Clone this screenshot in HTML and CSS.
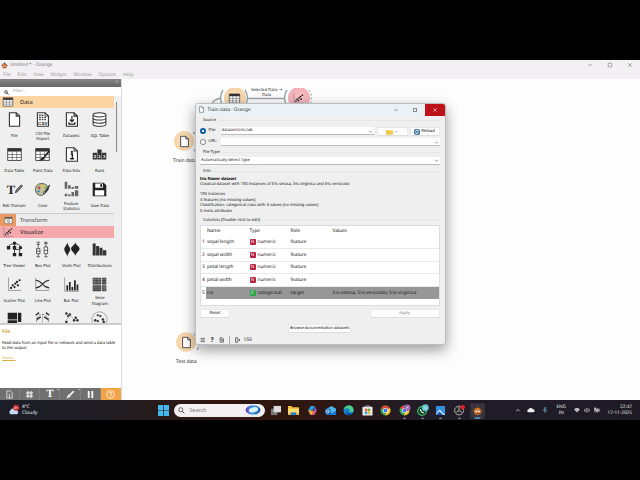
FILE: index.html
```html
<!DOCTYPE html>
<html lang="en">
<head>
    <meta charset="UTF-8">
    <title>Untitled * - Orange</title>
    <link rel="stylesheet" href="styles.css">
</head>
<body>
    <!-- shared shapes -->
    <svg width="0" height="0" class="defs">
        <symbol id="doc" viewBox="0 0 20 20"><path d="M4 2h8l4 4v12H4z" fill="#fff" stroke="#333" stroke-width="1.3"/><path d="M12 2v4h4" fill="none" stroke="#333" stroke-width="1.3"/></symbol>
        <symbol id="table" viewBox="0 0 20 20"><path d="M2 3h16v14H2z" fill="#fff" stroke="#333"/><path d="M2 3h16v3.500H2z" fill="#333"/><path d="M7.300 6v11M12.600 6v11M2 10h16M2 13.500h16" stroke="#555" stroke-width=".8"/></symbol>
        <symbol id="scatter" viewBox="0 0 20 20"><path d="M3 2v15h15" fill="none" stroke="#777" stroke-width=".8"/><g fill="#222"><circle cx="6" cy="14" r="1.300"/><circle cx="8" cy="11" r="1.300"/><circle cx="10" cy="13" r="1.300"/><circle cx="11" cy="9" r="1.300"/><circle cx="13" cy="7" r="1.300"/><circle cx="14" cy="11" r="1.300"/><circle cx="16" cy="5" r="1.300"/></g></symbol>
        <symbol id="orange" viewBox="0 0 20 20"><path d="M4 6l3-1 3-4 3 4 3 1-1 4H5z" fill="#6b4424"/><circle cx="10" cy="12" r="6.500" fill="#d97b35"/><path d="M1 10h5M14 10h5M5 16h10" stroke="#9a552a" stroke-width="2.500"/><circle cx="7.500" cy="11.500" r="1.600" fill="#fff"/><circle cx="12.500" cy="11.500" r="1.600" fill="#fff"/></symbol>
        <symbol id="chrome" viewBox="0 0 20 20"><circle cx="10" cy="10" r="9" fill="#38a655"/><path d="M10 10L2.200 5.500A9 9 0 0 1 17.800 5.500z" fill="#e44236"/><path d="M10 10l7.800-4.500A9 9 0 0 1 10 19z" fill="#fbc623"/><circle cx="10" cy="10" r="4.600" fill="#fff"/><circle cx="10" cy="10" r="3.500" fill="#397be8"/></symbol>
        <symbol id="chev" viewBox="0 0 10 10"><path d="M2 3.500l3 3 3-3" fill="none" stroke="#555" stroke-width="1.200"/></symbol>
    </svg>

    <div class="app">
        <div class="titlebar">
            <svg class="logo"><use href="#orange"/></svg>
            <span>Untitled * - Orange</span>
            <div class="win-buttons">
                <svg viewBox="0 0 10 10"><path d="M2 5h6" stroke="#777"/></svg>
                <svg viewBox="0 0 10 10"><path d="M2 2h6v6H2z" fill="none" stroke="#777"/></svg>
                <svg viewBox="0 0 10 10"><path d="M2 2l6 6M8 2l-6 6" stroke="#777"/></svg>
            </div>
        </div>
        <div class="menubar"><span>File</span><span>Edit</span><span>View</span><span>Widget</span><span>Window</span><span>Options</span><span>Help</span></div>
        <div class="workspace">
            <div class="sidebar">
                <div class="dock-title">«</div>
                <div class="filter"><svg viewBox="0 0 10 10"><circle cx="4" cy="4" r="2.700" fill="none" stroke="#222" stroke-width="1.400"/><path d="M6 6l3.200 3.200" stroke="#222" stroke-width="1.700"/></svg><span>Filter...</span></div>
                <div class="toolbox">
                    <div class="category data"><i><svg><use href="#table"/></svg></i><span>Data</span></div>
                    <div class="widgets">
                        <div class="widget"><svg><use href="#doc"/></svg><span>File</span></div>
                        <div class="widget"><svg viewBox="0 0 20 20"><path d="M4 2h9l4 4v12H4z" fill="#fff" stroke="#333" stroke-width="1.300"/><path d="M13 2v4h4" fill="none" stroke="#333"/><path d="M6 5h5M6 7.500h9M6 10h9" stroke="#444" stroke-dasharray="2 1" stroke-width="1.600"/><text x="4.800" y="17" class="glyph-csv">CSV</text></svg><span>CSV File<br>Import</span></div>
                        <div class="widget"><svg viewBox="0 0 20 20"><path d="M4 2h9l4 4v12H4z" fill="#fff" stroke="#333" stroke-width="1.300"/><path d="M13 2v4h4M10.500 6v6M8 10l2.500 2.500L13 10M7 13v2.500h7V13" fill="none" stroke="#222" stroke-width="1.300"/></svg><span>Datasets</span></div>
                        <div class="widget"><svg viewBox="0 0 20 20"><path d="M2.500 4.500v11c0 3.300 15 3.300 15 0v-11" fill="#fff" stroke="#333" stroke-width="1.200"/><ellipse cx="10" cy="4.500" rx="7.500" ry="2.500" fill="#fff" stroke="#333" stroke-width="1.200"/><path d="M2.500 8.200c0 3.300 15 3.300 15 0M2.500 11.900c0 3.300 15 3.300 15 0" fill="none" stroke="#333" stroke-width="1.200"/></svg><span>SQL Table</span></div>
                        <div class="widget"><svg><use href="#table"/></svg><span>Data Table</span></div>
                        <div class="widget"><svg viewBox="0 0 20 20"><use href="#table" width="20" height="20"/><path d="M18 6l-6 7" stroke="#222" stroke-width="2"/><path d="M5 17c4 0 3-5 7-4 1 3-2 5-7 4z" fill="#222"/></svg><span>Paint Data</span></div>
                        <div class="widget"><svg viewBox="0 0 20 20"><path d="M4 2h9l4 4v12H4z" fill="#fff" stroke="#333" stroke-width="1.300"/><path d="M13 2v4h4" fill="none" stroke="#333" stroke-width="1.200"/><circle cx="10.500" cy="7" r="1.300" fill="#222"/><path d="M9 9.500h2V15M8.500 15h4.500" fill="none" stroke="#222" stroke-width="1.700"/></svg><span>Data Info</span></div>
                        <div class="widget"><svg viewBox="0 0 20 20"><path d="M2 8h5v8H2zM7.500 4h5v12h-5zM13 8h5v8h-5z" fill="#333"/><text x="3.200" y="14.500" class="glyph-rank">2</text><text x="8.600" y="14.500" class="glyph-rank">1</text><text x="14.200" y="14.500" class="glyph-rank">3</text></svg><span>Rank</span></div>
                        <div class="widget"><svg viewBox="0 0 20 20"><text x="1" y="15" class="glyph-t">T</text><path d="M11 14l1-3.500 6-6 1.500 1.500-6 6.500z" fill="#777" stroke="#333" stroke-width=".8"/></svg><span>Edit Domain</span></div>
                        <div class="widget"><svg viewBox="0 0 20 20"><path d="M9 3C3 3 1 8 2 12c1 5 7 6 9 4 1-1-1-3 1-4s5 0 5-3-3-6-8-6z" fill="#c2c293" stroke="#444"/><circle cx="6" cy="8" r="1.600" fill="#b9475c"/><circle cx="10" cy="6" r="1.500" fill="#e3c43b"/><circle cx="5.500" cy="12" r="1.500" fill="#4a8bc2"/><circle cx="14" cy="8" r="1.300" fill="#59a062"/><path d="M18 4l-5 8-2 5 4-4 4-8z" fill="#333"/></svg><span>Color</span></div>
                        <div class="widget"><svg viewBox="0 0 20 20"><path d="M2 1h3v8H2zM6 5h3v4H6zM10 7h3v2h-3zM14 6h4v3h-4zM2 15h3v3H2zM6 16h3v2H6zM10 13h3v5h-3zM14 11h4v7h-4z" fill="#666"/></svg><span>Feature<br>Statistics</span></div>
                        <div class="widget"><svg viewBox="0 0 20 20"><path d="M2 2h13l3 3v13H2z" fill="#222"/><path d="M5 3h9v5H5zM4.500 11h11v6h-11z" fill="#fff"/><path d="M11 3.500h2v3.500h-2z" fill="#222"/></svg><span>Save Data</span></div>
                    </div>
                    <div class="category transform"><i><svg viewBox="0 0 20 20"><path d="M2 3h16v14H2z" fill="#fff" stroke="#444"/><path d="M2 3h16v3H2z" fill="#444"/><path d="M6 11a4 3 0 0 1 7-1M14 12a4 3 0 0 1-7 1" fill="none" stroke="#333" stroke-width="1.500"/></svg></i><span>Transform</span></div>
                    <div class="category visualize"><i><svg><use href="#scatter"/></svg></i><span>Visualize</span></div>
                    <div class="widgets visual">
                        <div class="widget"><svg viewBox="0 0 20 20"><path d="M10 3v5M3 7c0-5 14-5 14 0M10 8v8M10 10h6v5" fill="none" stroke="#333"/><path d="M1 6h4v4H1zM8 6h4v4H8zM8 14h4v4H8zM15 14h4v4h-4z" fill="#222"/><circle cx="10" cy="2.500" r="2" fill="#222"/><circle cx="17" cy="8" r="2" fill="#222"/></svg><span>Tree Viewer</span></div>
                        <div class="widget"><svg viewBox="0 0 20 20"><path d="M5 1v18M14 1v18M3 1.500h4M12 1.500h4M3 18.500h4M12 18.500h4M3 4h4M12 3h4" stroke="#555" stroke-width="1"/><path d="M3 9h4v6H3zM12 7h4v8h-4z" fill="#fff" stroke="#444"/><path d="M3 12h4M12 11h4" stroke="#444"/></svg><span>Box Plot</span></div>
                        <div class="widget"><svg viewBox="0 0 20 20"><path d="M5 1C5 5 1.500 7 1.500 10S5 15 5 19c0-4 3.500-6 3.500-9S5 5 5 1zM14.500 1c0 4-5 5-5 8s5 5 5 9c0-4 5-6 5-9s-5-4-5-8z" fill="#222"/></svg><span>Violin Plot</span></div>
                        <div class="widget"><svg viewBox="0 0 20 20"><path d="M2 3h3.500v14H2zM6 6h3.500v11H6zM10 8h3.500v9H10zM14 11h4v6h-4z" fill="#333"/></svg><span>Distributions</span></div>
                        <div class="widget"><svg><use href="#scatter"/></svg><span>Scatter Plot</span></div>
                        <div class="widget"><svg viewBox="0 0 20 20"><path d="M2 2v15h16" fill="none" stroke="#777" stroke-width=".8"/><path d="M2 5c8 0 8 9 16 9M2 14c8 0 8-9 16-9" fill="none" stroke="#333" stroke-width="1.300"/></svg><span>Line Plot</span></div>
                        <div class="widget"><svg viewBox="0 0 20 20"><path d="M2 2v16h17" fill="none" stroke="#777" stroke-width=".8"/><path d="M4 11h2v6H4zM7 7h2v10H7zM10 13h2v4h-2zM13 5h2v12h-2zM16 10h2v7h-2z" fill="#222"/></svg><span>Bar Plot</span></div>
                        <div class="widget"><svg viewBox="0 0 20 20"><path d="M2 2h10v8H2zM13 2h5v8h-5zM2 11h10v7H2zM13 11h5v7h-5z" fill="#444"/><path d="M2 4h16M2 7h16M2 13h16M2 15.500h16M4.500 2v8M9 2v8M15.500 11v7" stroke="#bbb" stroke-width=".5"/></svg><span>Sieve<br>Diagram</span></div>
                        <div class="widget"><svg viewBox="0 0 20 20"><path d="M2 2h11v8H2zM14 2h4v11h-4zM2 11h11v7H2z" fill="#222"/></svg></div>
                        <div class="widget"><svg viewBox="0 0 20 20"><path d="M2 5l4-3M14 2l4 3M3 10l5-3M12 7l5 3" stroke="#333" stroke-width="1.800"/><circle cx="10" cy="11" r="7" fill="none" stroke="#555" stroke-dasharray="2 2"/><path d="M10 3v12" stroke="#888" stroke-width=".6"/></svg></div>
                        <div class="widget"><svg viewBox="0 0 20 20"><path d="M3 12l5-7 6 6" fill="none" stroke="#999" stroke-width=".8"/><g fill="#333"><circle cx="4" cy="3" r="1.500"/><circle cx="8" cy="4" r="1.500"/><circle cx="6" cy="6" r="1.300"/><circle cx="15" cy="8" r="1.500"/><circle cx="17" cy="11" r="1.500"/><circle cx="13" cy="11" r="1.500"/><circle cx="4" cy="13" r="1.500"/></g></svg></div>
                        <div class="widget"><svg viewBox="0 0 20 20"><circle cx="10" cy="10" r="9" fill="none" stroke="#888" stroke-width=".8"/><g fill="#333"><circle cx="8" cy="5" r="1.300"/><circle cx="11" cy="6" r="1.300"/><circle cx="5" cy="11" r="1.500"/><circle cx="14" cy="10" r="1.500"/><circle cx="8" cy="12" r="1.300"/><circle cx="15" cy="13" r="1.500"/></g></svg></div>
                    </div>
                    <div class="scrollbar"></div>
                </div>
                <div class="help">
                    <b>File</b>
                    <p>Read data from an input file or network and send a data table<br>to the output.</p>
                    <a>more...</a>
                </div>
                <div class="tools">
                    <span><svg viewBox="0 0 10 10"><path d="M2 1h4l2 2v6H2zM5 4v4M4 8h2" fill="none" stroke="#ddd"/></svg></span>
                    <span><svg viewBox="0 0 10 10"><path d="M3.300 1v8M6.700 1v8M1 3.300h8M1 6.700h8" stroke="#fff" stroke-width="1.100"/></svg></span>
                    <span class="tool-text">T<em></em></span>
                    <span><svg viewBox="0 0 10 10"><path d="M1 9l2-4 2 2zM4 5l4-4 1 1-4 4z" fill="#fff" stroke="#fff" stroke-width=".6"/></svg><em></em></span>
                    <span><svg viewBox="0 0 10 10"><path d="M2 1h2v8H2zM6 1h2v8H6z" fill="#fff"/></svg></span>
                    <span class="active"><svg viewBox="0 0 10 10"><circle cx="5" cy="5" r="4.300" fill="none" stroke="#fff" stroke-width=".8"/><path d="M3.500 4a1.500 1.500 0 1 1 1.500 1.500v1M5 7.200v1" fill="none" stroke="#fff" stroke-width=".9"/></svg></span>
                </div>
            </div>

            <div class="canvas">
                <svg class="links" viewBox="122 88 518 312">
                    <path d="M212 104c1-3 4-5 9-6M247 98.500h38" fill="none" stroke="#9da5a8" stroke-width="1.300"/>
                    <path d="M223 90a14 14 0 0 0 0 16M245 90a14 14 0 0 1 0 16M287 90a14 14 0 0 0 0 16" fill="none" stroke="#93a3a9" stroke-width="1.400"/>
                    <path d="M309 90a14 14 0 0 1 0 16" fill="none" stroke="#a7b3b6" stroke-width="1.300" stroke-dasharray="2 2"/>
                    <path d="M193 132q4 3 5 9t-4 10M194 334q4 3 5 8t-3 9" fill="none" stroke="#8ba4ae" stroke-width="1.200" stroke-dasharray="3 2"/>
                </svg>
                <div class="node table-node"><svg><use href="#table"/></svg></div>
                <div class="node scatter-node"><svg><use href="#scatter"/></svg></div>
                <div class="node train-node"><svg><use href="#doc"/></svg></div>
                <div class="node test-node"><svg><use href="#doc"/></svg></div>
                <span class="link-label">Selected Data <em>→</em><br>Data</span>
                <span class="node-label train-label">Train data</span>
                <span class="node-label test-label">Test data</span>
            </div>
        </div>
    </div>

    <div class="dialog">
        <div class="dialog-title">
            <svg><use href="#doc"/></svg><span>Train data - Orange</span>
            <div class="dialog-buttons">
                <i><svg viewBox="0 0 10 10"><path d="M1 5h8" stroke="#555" stroke-width="1.500"/></svg></i>
                <i><svg viewBox="0 0 10 10"><path d="M1 1h8v8H1z" fill="none" stroke="#333" stroke-width="1.500"/></svg></i>
                <i class="close"><svg viewBox="0 0 10 10"><path d="M1 1l8 8M9 1l-8 8" stroke="#fff" stroke-width="1.400"/></svg></i>
            </div>
        </div>
        <div class="dialog-body">
            <div class="legend source-legend">Source</div>
            <div class="source-row">
                <i class="radio checked"></i><label>File:</label>
                <div class="combo"><span>datasets\iris.tab</span><svg><use href="#chev"/></svg></div>
                <button class="browse"><svg viewBox="0 0 10 8"><path d="M0 1h4l1 1h5v6H0z" fill="#efca4e"/></svg>...</button>
                <button class="reload"><svg viewBox="0 0 10 10"><rect width="10" height="10" rx="3" fill="#3b7299"/><path d="M2 5a3 3 0 0 1 5-2M8 5a3 3 0 0 1-5 2M7 1v2.500H5M3 9V6.500h2" fill="none" stroke="#fff" stroke-width="1.200"/></svg>Reload</button>
            </div>
            <div class="source-row url-row">
                <i class="radio"></i><label>URL:</label>
                <div class="combo"><svg><use href="#chev"/></svg></div>
            </div>
            <div class="legend type-legend">File Type</div>
            <div class="combo type-combo"><span>Automatically detect type</span><svg><use href="#chev"/></svg></div>
            <div class="legend info-legend">Info</div>
            <div class="info">
                <b>Iris flower dataset</b>
                <p>Classical dataset with 150 instances of Iris setosa, Iris virginica and Iris versicolor.</p>
                <p class="stats">150 instances<br>4 features (no missing values)<br>Classification; categorical class with 3 values (no missing values)<br>0 meta attributes</p>
            </div>
            <div class="legend columns-legend">Columns (Double click to edit)</div>
            <div class="columns">
                <div class="row head"><span></span><span>Name</span><span>Type</span><span>Role</span><span>Values</span></div>
                <div class="row"><span>1</span><span>sepal length</span><span><i class="badge">N</i>numeric</span><span>feature</span><span></span></div>
                <div class="row"><span>2</span><span>sepal width</span><span><i class="badge">N</i>numeric</span><span>feature</span><span></span></div>
                <div class="row"><span>3</span><span>petal length</span><span><i class="badge">N</i>numeric</span><span>feature</span><span></span></div>
                <div class="row"><span>4</span><span>petal width</span><span><i class="badge">N</i>numeric</span><span>feature</span><span></span></div>
                <div class="row selected"><span>5</span><span>iris</span><span><i class="badge cat">C</i>categorical</span><span>target</span><span>Iris-setosa, Iris-versicolor, Iris-virginica</span></div>
            </div>
            <div class="actions"><button>Reset</button><button class="apply">Apply</button></div>
            <button class="docs">Browse documentation datasets</button>
            <div class="status">
                <svg viewBox="0 0 10 10"><path d="M1 2h8M1 5h8M1 8h8" stroke="#444" stroke-width="1.300"/></svg>
                <b>?</b>
                <svg viewBox="0 0 10 10"><path d="M2 1h4l2 2v6H2zM4 4h3M4 6h3" fill="none" stroke="#333" stroke-width="1.200"/></svg>
                <i></i>
                <svg viewBox="0 0 10 10"><path d="M5 3V1H1v8h4V7M3 5h6M7 3l2 2-2 2" fill="none" stroke="#333" stroke-width="1.200"/></svg>
                <span>150</span>
            </div>
        </div>
    </div>

    <div class="taskbar">
        <div class="weather">
            <svg viewBox="0 0 14 12"><path d="M3 11a3 3 0 0 1 0-5 4 4 0 0 1 7 0 2.600 2.600 0 0 1 0 5z" fill="#c6d9f8"/><circle cx="9.500" cy="3.500" r="3.500" fill="#d92c36"/><text x="7.200" y="5" class="glyph-count">9+</text></svg>
            <div><span>4°C</span><span>Cloudy</span></div>
        </div>
        <div class="apps">
            <svg viewBox="0 0 10 10"><path d="M0 0h4.700v4.700H0zM5.300 0H10v4.700H5.300zM0 5.300h4.700V10H0zM5.300 5.300H10V10H5.300z" fill="#45b9ed"/></svg>
            <div class="search"><svg viewBox="0 0 10 10"><circle cx="4" cy="4" r="3" fill="none" stroke="#333"/><path d="M6 6l3 3" stroke="#333" stroke-width="1.300"/></svg><span>Search</span><svg class="bing" viewBox="0 0 16 10"><defs><linearGradient id="g"><stop offset="0" stop-color="#6a39b5"/><stop offset=".5" stop-color="#3a9fe8"/><stop offset="1" stop-color="#1b4ea4"/></linearGradient></defs><ellipse cx="8" cy="5" rx="7.500" ry="4.700" fill="url(#g)"/><ellipse cx="8.500" cy="5" rx="4.800" ry="2.400" fill="#d5f5f6" transform="rotate(-15 8 5)"/></svg></div>
            <svg viewBox="0 0 12 12"><path d="M1 4h7v7H1z" fill="#777"/><path d="M4 1h8v7H4z" fill="#ddd"/></svg>
            <svg viewBox="0 0 12 12"><path d="M0 1h4l1 1.500h7V11H0z" fill="#f2bd2f"/><path d="M0 4h12v5H0z" fill="#fbdc70"/><path d="M3 8h6v3H3z" fill="#277fd0"/></svg>
            <svg viewBox="0 0 12 12"><path d="M4 1h4L6 6H1z" fill="#299fe0"/><path d="M8 1l3 5H7z" fill="#7261dc"/><path d="M1 6h5l2 5H4z" fill="#e9b441"/><path d="M7 6h4l-3 5H5z" fill="#df5a7d"/></svg>
            <svg viewBox="0 0 12 12"><path d="M2 4l5-3 5 3v7H2z" fill="#49b5f0"/><path d="M3 6l5 3 4-3v5H3z" fill="#1679ca"/><rect y="4" width="6" height="6" rx="1" fill="#105fa8"/><circle cx="3" cy="7" r="1.600" fill="none" stroke="#fff"/></svg>
            <svg viewBox="0 0 12 12"><circle cx="6" cy="6" r="5.500" fill="#1584c9"/><path d="M1 4c2-5 11-5 10.500 2-.5 3-5 2-4 0C7 3 3 3 1 5z" fill="#4fd08d"/><path d="M4 6c0 4 4 4 7 3-3 4-8 3-7-3z" fill="#0a397e"/></svg>
            <svg viewBox="0 0 12 12"><path d="M4 3V1h4v2" fill="none" stroke="#aac"/><rect x=".5" y="2" width="11" height="9.500" rx="1" fill="#eee"/><path d="M3 4h2.800v2.800H3z" fill="#e46339"/><path d="M6.200 4H9v2.800H6.200z" fill="#6dab35"/><path d="M3 7.200h2.800V10H3z" fill="#349bdc"/><path d="M6.200 7.200H9V10H6.200z" fill="#e9b42f"/></svg>
            <svg><use href="#chrome"/></svg>
            <svg class="running" viewBox="0 0 12 12"><use href="#chrome" width="12" height="12"/><circle cx="9" cy="3" r="3.500" fill="#9b6ab9"/><path d="M8 4l2-2" stroke="#fff"/><path d="M4.500 14.500h3" stroke="#aaa"/></svg>
            <svg class="running" viewBox="0 0 12 12"><circle cx="5.500" cy="6.500" r="4.800" fill="#15391f" stroke="#39b568" stroke-width="1.400"/><path d="M3.500 4.500q1 4 4 4" fill="none" stroke="#fff" stroke-width="1.300"/><circle cx="9" cy="3" r="3.800" fill="#5fc3d0"/><text x="6.700" y="4.600" class="glyph-wa">22</text><path d="M4.500 14.500h3" stroke="#aaa"/></svg>
            <svg class="running" viewBox="0 0 12 12"><rect x="1" y="1" width="10" height="10" rx="1" fill="#3691dd"/><path d="M1 10l4-5 6 6H1z" fill="#d0eafb"/><path d="M1 11l4-4 4 4z" fill="#1a5ba9"/><path d="M4.500 14.500h3" stroke="#aaa"/></svg>
            <svg class="running" viewBox="0 0 12 12"><circle cx="5.500" cy="6" r="4.800" fill="#222" stroke="#bbb"/><path d="M5.500 6V2M5.500 6l3 2M5.500 6l-3 2" stroke="#bbb"/><circle cx="9.500" cy="2.500" r="2.500" fill="#e51b24"/><path d="M4.500 14.500h3" stroke="#aaa"/></svg>
            <svg class="current" viewBox="0 0 12 12"><rect x="-2" y="-2" width="16" height="17" rx="1" fill="#393440"/><use href="#orange" width="12" height="12"/><path d="M3 14.300h6" stroke="#55b3ec" stroke-width="1.400"/></svg>
        </div>
        <div class="tray">
            <svg class="up" viewBox="0 0 10 10"><path d="M2 7l3-3 3 3" fill="none" stroke="#ddd" stroke-width="1.300"/></svg>
            <svg class="cloud" viewBox="0 0 10 8"><path d="M2 7a2 2 0 0 1 0-4 3 3 0 0 1 5.500 0 2 2 0 0 1 .5 4z" fill="#eee"/></svg>
            <svg class="mic" viewBox="0 0 10 10"><path d="M4 1h2v5H4zM2 4.500c0 4 6 4 6 0M5 8v2" fill="none" stroke="#62abc0" stroke-width="1.200"/></svg>
            <div class="lang">ENG<br>IN</div>
            <svg class="wifi" viewBox="0 0 10 10"><path d="M0 4a7 7 0 0 1 10 0L5 9z" fill="#aaa"/><path d="M1 4a6 6 0 0 1 8 0M3 6a3 3 0 0 1 4 0" fill="none" stroke="#eee"/></svg>
            <svg class="sound" viewBox="0 0 10 10"><path d="M1 4h2l2-2v7L3 7H1zM6.500 4q1.500 1.500 0 3M8 2.500q3 3 0 6" fill="none" stroke="#ddd"/></svg>
            <svg class="battery" viewBox="0 0 10 10"><path d="M1 3h7v5H1zM9 4v3" fill="none" stroke="#ddd"/><path d="M3 4h4v3H3zM1 1h2v4H1z" fill="#ddd"/></svg>
            <div class="clock">22:47<br>17-11-2025</div>
        </div>
    </div>
</body>
</html>
```

FILE: styles.css
```css
* {
    box-sizing: border-box;
}

body {
    margin: 0;
    padding-top: 60px;
    width: 640px;
    height: 480px;
    background: #000;
    color: #1a1a1a;
    font-family: "Noto Sans", "Open Sans", sans-serif;
    font-size: 5px;
    line-height: 6px;
    text-rendering: geometricPrecision;
    overflow: hidden;
    position: relative;
}

svg {
    display: block;
    flex: none;
}

p {
    margin: 0;
}

i,
em {
    font-style: normal;
}

.defs {
    position: absolute;
}

button {
    display: flex;
    align-items: center;
    justify-content: center;
    padding: 1px 0 0;
    border: 1px solid #e9e9e9;
    border-bottom-color: #ddd;
    border-radius: 1px;
    background: #fdfdfd;
    color: #111;
    font: 4.2px/6px "Noto Sans", sans-serif;
    text-rendering: geometricPrecision;
}

.app {
    height: 340px;
    display: flex;
    flex-direction: column;
    background: #f2f0f3;
}

.titlebar {
    height: 10px;
    display: flex;
    align-items: center;
    padding-left: 1px;
    gap: 2px;
    color: #777;
    font-size: 4.75px;
}

.logo {
    width: 7px;
    height: 7px;
}

.win-buttons {
    display: flex;
    gap: 14px;
    margin-left: auto;
    padding-right: 7px;
}

.win-buttons svg {
    width: 6px;
    height: 6px;
}

.menubar {
    height: 9px;
    display: flex;
    align-items: center;
    gap: 7px;
    padding-left: 3px;
    color: #999;
    font-size: 4.75px;
}

.workspace {
    height: 321px;
    display: flex;
}

.sidebar {
    width: 122px;
    display: flex;
    flex-direction: column;
    background: #efeff0;
    border-right: 1px solid #ddd;
}

.dock-title {
    height: 8px;
    padding-right: 3px;
    background: linear-gradient(#858585, #666);
    color: #ccc;
    text-align: right;
}

.filter {
    height: 9px;
    display: flex;
    align-items: center;
    gap: 4px;
    padding: 1px 0 0 4px;
    background: #fff;
    color: #999;
    font-size: 4.2px;
}

.filter svg {
    width: 5px;
    height: 5px;
}

.toolbox {
    height: 227px;
    overflow: hidden;
    position: relative;
}

.category {
    width: 114px;
    height: 12px;
    display: flex;
    align-items: center;
    font-size: 5.7px;
}

.category i {
    width: 16px;
    height: 100%;
    display: grid;
    place-items: center;
    margin-right: 4px;
}

.category svg {
    width: 12px;
    height: 12px;
}

.data {
    background: #fbd5a1;
}

.transform {
    height: 13px;
    background: #ececec;
    border-top: 1px solid #ccc;
    color: #444;
}

.transform i {
    background: #e89a62;
}

.transform svg {
    width: 9px;
    height: 9px;
}

.visualize {
    background: #f5a9ad;
}

.widgets {
    width: 114px;
    display: grid;
    grid-template-columns: repeat(4, 28.5px);
    grid-auto-rows: 35px;
    height: 105px;
    padding-top: 3px;
}

.visual {
    padding-top: 2.5px;
}

.widget {
    display: flex;
    flex-direction: column;
    align-items: center;
}

.widget svg {
    width: 17px;
    height: 17px;
}

.widget span {
    height: 12px;
    margin-top: 3px;
    display: grid;
    place-items: center;
    font-size: 4.1px;
    line-height: 5.3px;
    letter-spacing: -0.06px;
    word-spacing: 0.2px;
    text-align: center;
    white-space: nowrap;
}

.scrollbar {
    position: absolute;
    right: 4px;
    top: 6px;
    width: 1.5px;
    height: 50px;
    background: #888;
}

.help {
    height: 65px;
    padding: 4.5px 2px;
    border-top: 2px solid #ccc;
    background: #fff;
    font-size: 4.15px;
    line-height: 5.5px;
    white-space: nowrap;
}

.help b {
    display: block;
    font-size: 4.8px;
    color: #d2b03a;
}

.help p {
    margin: 5.5px 0 4.5px;
    letter-spacing: -0.15px;
    word-spacing: 0.2px;
}

.help a {
    color: #d2b03a;
    font-size: 4.1px;
    text-decoration: underline;
}

.tools {
    height: 12px;
    display: grid;
    grid-template-columns: repeat(6, 1fr);
    background: #707070;
}

.tools span {
    display: grid;
    place-items: center;
    position: relative;
    border-right: 1px solid #808080;
}

.tools svg {
    width: 9px;
    height: 9px;
}

.tools .tool-text {
    color: #fff;
    font: bold 11px/11px "Liberation Serif", serif;
}

.tools em {
    position: absolute;
    right: 0;
    top: 1px;
    border: 1.5px solid transparent;
    border-top-color: #fff;
}

.tools .active {
    background: #f3a348;
    border: 0;
}

/* the scene is scrolled, its top edge cuts the upper nodes */
.canvas {
    flex: 1;
    position: relative;
    border-top: 9px solid #fdfdfd;
    background: #fdfdfd;
    overflow: hidden;
}

.links {
    width: 518px;
    height: 312px;
}

.node {
    position: absolute;
    width: 20px;
    height: 20px;
    border-radius: 50%;
    display: grid;
    place-items: center;
    background: radial-gradient(#fce2bf, #f2cd9d);
}

.node svg {
    width: 13px;
    height: 13px;
}

.table-node {
    left: 101.5px;
    top: -1px;
    width: 22px;
    height: 22px;
}

.scatter-node {
    left: 165.5px;
    top: -1px;
    width: 22px;
    height: 22px;
    background: radial-gradient(#f9c2c7, #efa4ae);
}

.train-node {
    left: 52px;
    top: 43px;
}

.test-node {
    left: 54px;
    top: 244px;
}

.link-label,
.node-label {
    position: absolute;
    white-space: nowrap;
    text-align: center;
}

.link-label {
    left: 129px;
    top: 0;
    font-size: 4.1px;
    line-height: 5.3px;
}

.link-label em {
    font-family: "DejaVu Sans", sans-serif;
    font-size: 4.6px;
    line-height: 5px;
}

.node-label {
    font-size: 4.9px;
}

.train-label {
    left: 51px;
    top: 69.5px;
}

.test-label {
    left: 54px;
    top: 270.5px;
}

.dialog {
    position: absolute;
    left: 195px;
    top: 102.5px;
    width: 250.5px;
    height: 242.5px;
    border: 1px solid #b9bdc0;
    border-radius: 3px;
    background: #efefef;
    box-shadow: 0 5px 14px rgba(0, 0, 0, .4);
    overflow: hidden;
}

.dialog-title {
    height: 12px;
    display: flex;
    align-items: center;
    gap: 2.5px;
    padding-left: 2px;
    background: #eaf2f5;
    font-size: 4.75px;
    color: #333;
}

.dialog-title > svg {
    width: 7px;
    height: 7px;
}

.dialog-buttons {
    height: 12px;
    display: flex;
    margin-left: auto;
}

.dialog-buttons i {
    width: 19.5px;
    display: grid;
    place-items: center;
}

.dialog-buttons svg {
    width: 4px;
    height: 4px;
}

.dialog-buttons .close {
    background: #bd1219;
}

.dialog-body {
    padding: 0 5px 0 4px;
    font-size: 4.1px;
}

.legend {
    height: 6px;
    padding-left: 3px;
    display: flex;
    align-items: center;
    gap: 2px;
    white-space: nowrap;
}

.legend::after {
    content: "";
    flex: 1;
    border-top: 1px solid #e6e6e6;
}

.source-legend {
    margin: 2px 0 3px;
}

.source-row {
    height: 9px;
    display: flex;
    align-items: center;
}

.source-row label {
    width: 12px;
    margin-left: 3px;
}

.radio {
    width: 5.5px;
    height: 5.5px;
    border: 1px solid #777;
    border-radius: 50%;
    background: #fff;
}

.checked {
    border: 2px solid #1261a5;
}

.combo {
    flex: 1;
    height: 8px;
    display: flex;
    align-items: center;
    padding: 1px 1px 0;
    border-bottom: 1px solid #bbb;
    background: #fff;
}

.combo svg {
    width: 5px;
    height: 5px;
    margin-left: auto;
}

.browse {
    width: 31px;
    height: 9px;
    margin: 0 2px 0 3px;
    gap: 1px;
}

.browse svg {
    width: 7px;
    height: 6px;
}

.reload {
    width: 30px;
    height: 9px;
    gap: 1px;
}

.reload svg {
    width: 6px;
    height: 6px;
}

.url-row {
    margin-top: 2px;
}

.type-legend {
    margin: 3px 0 1px;
}

.info-legend {
    margin-top: 4px;
}

.info {
    padding-top: 2px;
    height: 43px;
    line-height: 5.4px;
    font-size: 4.1px;
    letter-spacing: -0.1px;
    word-spacing: 0.3px;
    white-space: nowrap;
}

.info b {
    display: block;
    color: #000;
}

.stats {
    margin-top: 5px;
}

.columns {
    height: 81px;
    margin-top: 1px;
    background: #fff;
    border: 1px solid #ddd;
    font-size: 4.75px;
    letter-spacing: -0.03px;
}

.row {
    height: 12.5px;
    display: grid;
    grid-template-columns: 5px 42.5px 41px 42px 1fr;
    align-items: center;
    border-bottom: 1px solid #e9e9e9;
    white-space: nowrap;
}

.row span {
    display: flex;
    align-items: center;
    padding-left: 1px;
}

.head {
    height: 11px;
    border-color: #fff;
}

.badge {
    width: 6px;
    height: 6px;
    margin-right: 2px;
    border-radius: 1px;
    background: #b52242;
    color: #fff;
    font-size: 4.5px;
    text-align: center;
}

.cat {
    background: #27a849;
}

.selected {
    background: linear-gradient(90deg, #fff 5px, #979797 5px);
    border: 0;
}

.actions {
    display: flex;
    justify-content: space-between;
    margin-top: 3.5px;
}

.actions button {
    width: 30px;
    height: 9px;
}

.actions .apply {
    width: 70px;
    color: #888;
}

.docs {
    width: 63px;
    height: 9px;
    margin: 5.5px auto 0;
    font-size: 4px;
    letter-spacing: -0.04px;
    white-space: nowrap;
}

.status {
    height: 10px;
    display: flex;
    align-items: center;
    gap: 5px;
    margin-top: 2px;
    font-size: 4.8px;
}

.status svg {
    width: 5.5px;
    height: 6px;
}

.status b {
    font-size: 6.5px;
}

.status i {
    width: 1px;
    height: 8px;
    background: #aaa;
}

.status span {
    margin-left: -2px;
}

.taskbar {
    height: 20px;
    display: flex;
    align-items: center;
    background: linear-gradient(90deg, #1b1d27, #201c22 18%, #30170f 35%, #2e1712 50%, #211c28 66%, #1e1b26);
    color: #eee;
}

.weather {
    width: 158px;
    display: flex;
    gap: 2px;
    padding-left: 8px;
}

.weather svg {
    width: 12px;
    height: 12px;
}

.weather span {
    display: block;
    font-size: 4.8px;
    line-height: 6.5px;
}

.apps {
    display: flex;
    align-items: center;
    gap: 7.4px;
}

.apps > svg {
    width: 11px;
    height: 11px;
    overflow: visible;
}

.search {
    width: 91px;
    height: 13px;
    margin: 0 -3px 0 -2px;
    display: flex;
    align-items: center;
    gap: 4px;
    padding: 0 4px;
    border-radius: 7px;
    background: #f2f0f1;
    color: #777;
    font-size: 5.4px;
}

.search svg {
    width: 7px;
    height: 7px;
}

.search .bing {
    width: 16px;
    height: 10px;
    margin-left: auto;
}

.tray {
    margin-left: auto;
    display: flex;
    align-items: center;
    padding-right: 8px;
    font-size: 4.7px;
    line-height: 6.4px;
}

.tray svg {
    width: 6px;
    height: 6px;
}

.tray .cloud {
    width: 8px;
    margin-left: 6px;
}

.tray .mic {
    margin-left: 7px;
}

.lang {
    margin: 0 8px;
    text-align: center;
}

.tray .sound,
.tray .battery {
    margin-left: 4px;
}

.clock {
    width: 32px;
    text-align: right;
    white-space: nowrap;
}

.glyph-csv {
    font: bold 5.5px "Liberation Sans", sans-serif;
    fill: #222;
}

.glyph-rank {
    font: bold 5px "Liberation Sans", sans-serif;
    fill: #fff;
}

.glyph-t {
    font: bold 15px "Liberation Serif", serif;
    fill: #222;
}

.glyph-count,
.glyph-wa {
    font: 4px "Liberation Sans", sans-serif;
    fill: #fff;
}
```
